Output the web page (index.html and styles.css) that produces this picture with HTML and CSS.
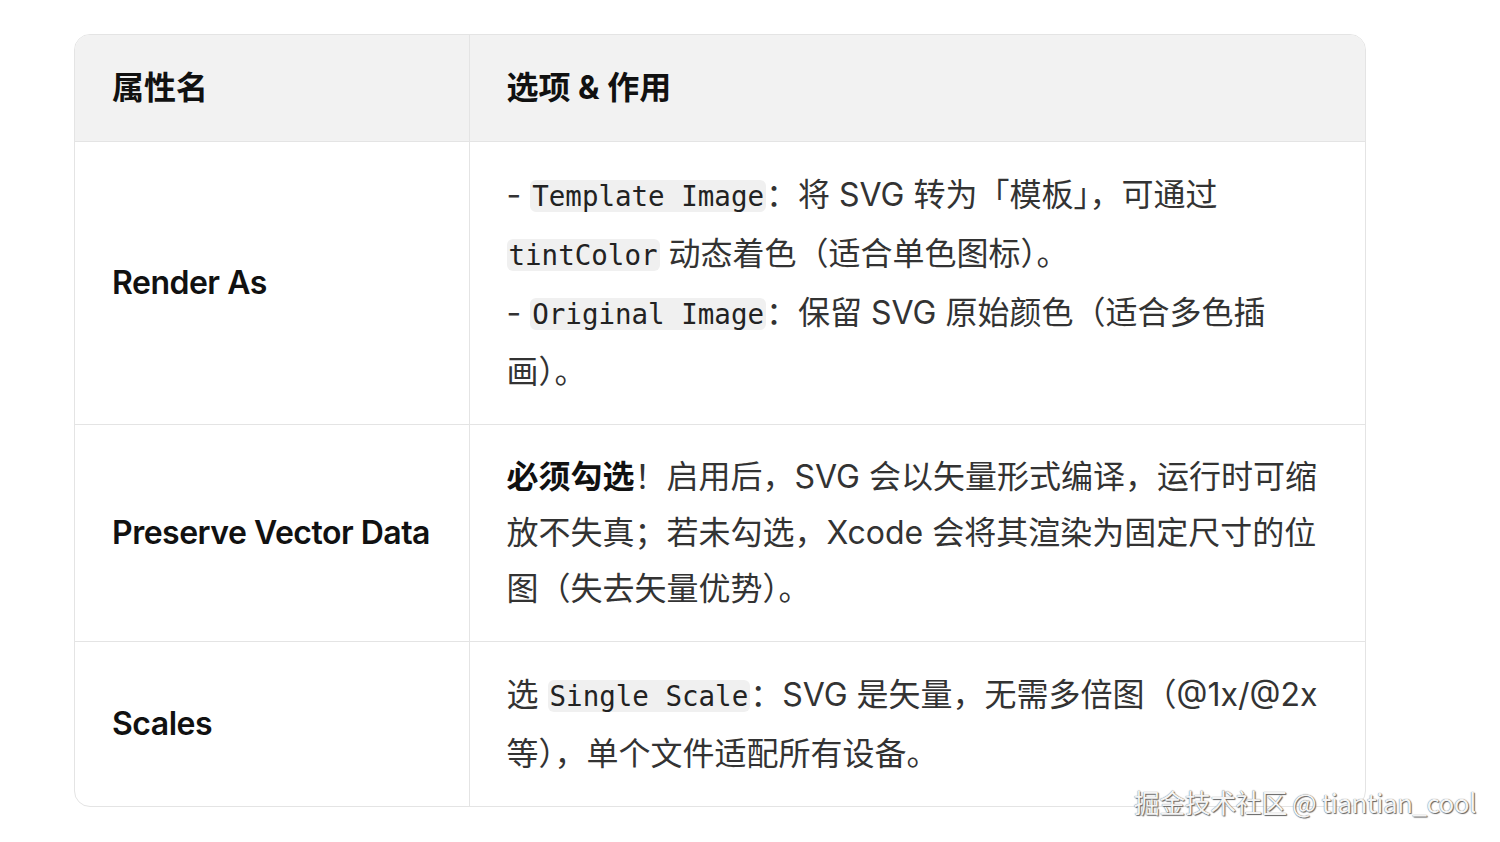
FILE: index.html
```html
<!DOCTYPE html>
<html lang="zh-CN">
<head>
<meta charset="utf-8">
<title>属性表</title>
<link rel="stylesheet" href="styles.css">
</head>
<body>
<div class="page">
  <div class="table-wrap">
    <table class="props">
      <colgroup>
        <col class="col-name">
        <col class="col-desc">
      </colgroup>
      <thead>
        <tr>
          <th>属性名</th>
          <th>选项 &amp; 作用</th>
        </tr>
      </thead>
      <tbody>
        <tr>
          <td class="name">Render As</td>
          <td class="desc tall">- <code>Template Image</code>：将 SVG 转为「模板」，可通过 <code>tintColor</code> 动态着色（适合单色图标）。<br>- <code>Original Image</code>：保留 SVG 原始颜色（适合多色插画）。</td>
        </tr>
        <tr>
          <td class="name">Preserve Vector Data</td>
          <td class="desc"><strong>必须勾选</strong>！启用后，SVG 会以矢量形式编译，运行时可缩放不失真；若未勾选，Xcode 会将其渲染为固定尺寸的位图（失去矢量优势）。</td>
        </tr>
        <tr>
          <td class="name">Scales</td>
          <td class="desc tall">选 <code>Single Scale</code>：SVG 是矢量，无需多倍图（@1x/@2x 等），单个文件适配所有设备。</td>
        </tr>
      </tbody>
    </table>
  </div>
  <div class="watermark">掘金技术社区 @ tiantian_cool</div>
</div>
</body>
</html>
```
FILE: styles.css
```css
html, body {
  margin: 0;
  padding: 0;
  background: #ffffff;
}

body {
  font-family: Inter, "Noto Sans CJK SC", sans-serif;
  color: #333333;
}

.page {
  position: relative;
  width: 1500px;
  height: 842px;
  padding: 34px 0 0 74px;
  box-sizing: border-box;
}

.table-wrap {
  width: 1292px;
  border: 1px solid #e4e4e4;
  border-radius: 16px;
  overflow: hidden;
  box-sizing: border-box;
}

.props {
  width: 100%;
  border-collapse: collapse;
  table-layout: fixed;
}

.col-name {
  width: 394px;
}

.props th,
.props td {
  padding: 24px 38px 24px 37px;
  text-align: left;
  border-right: 1px solid #e4e4e4;
  border-bottom: 1px solid #e4e4e4;
}

.props th:last-child,
.props td:last-child {
  border-right: none;
}

.props tbody tr:last-child td {
  border-bottom: none;
}

.props th {
  background: #f2f2f2;
  font-size: 32px;
  font-weight: 700;
  color: #111111;
  height: 58px;
  line-height: 58px;
}

.props td.name {
  font-size: 32px;
  font-weight: 600;
  color: #111111;
  vertical-align: middle;
  line-height: 56px;
  letter-spacing: -0.5px;
  white-space: nowrap;
}

.props td.desc {
  font-size: 32px;
  line-height: 56px;
  color: #333333;
  vertical-align: middle;
}

.props td.desc.tall {
  line-height: 59px;
  padding-top: 23px;
  padding-bottom: 23px;
}

.props strong {
  color: #111111;
  font-weight: 700;
}

.props code {
  font-family: "DejaVu Sans Mono", monospace;
  font-size: 27.5px;
  line-height: 1;
  background: #f0f0f0;
  border-radius: 6px;
  padding: 0 2px;
  color: #222222;
}

.watermark {
  position: absolute;
  right: 24px;
  bottom: 22px;
  font-size: 26px;
  color: #f4f4f4;
  font-family: "Noto Sans CJK SC", sans-serif;
  text-shadow: 0 0 1px #555, 1px 1px 1px #666;
  letter-spacing: -0.5px;
}
```
